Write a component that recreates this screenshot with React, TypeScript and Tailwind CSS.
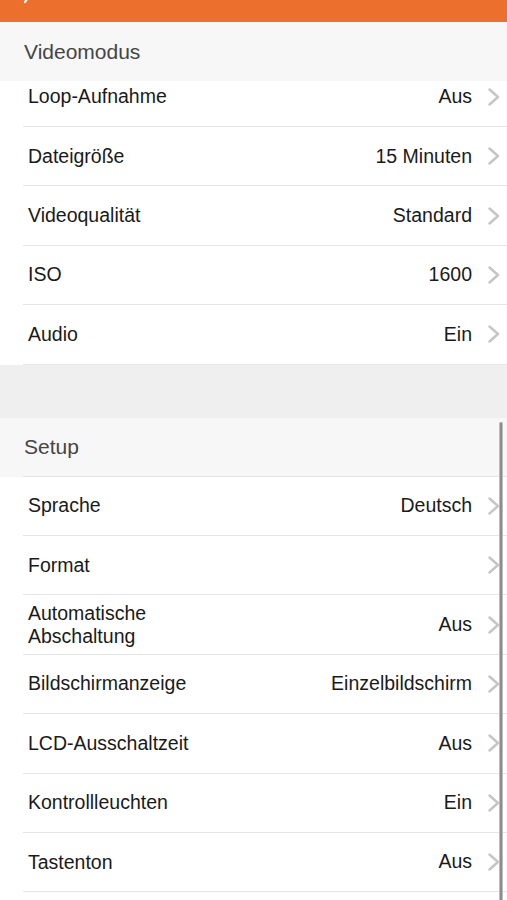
const videoRows = [
  { label: 'Dateigröße', value: '15 Minuten' },
  { label: 'Videoqualität', value: 'Standard' },
  { label: 'ISO', value: '1600' },
  { label: 'Audio', value: 'Ein' },
];

const setupRows = [
  { label: 'Sprache', value: 'Deutsch' },
  { label: 'Format', value: '' },
  { label: 'Automatische\nAbschaltung', value: 'Aus' },
  { label: 'Bildschirmanzeige', value: 'Einzelbildschirm' },
  { label: 'LCD-Ausschaltzeit', value: 'Aus' },
  { label: 'Kontrollleuchten', value: 'Ein' },
  { label: 'Tastenton', value: 'Aus' },
];

function Chevron() {
  return (
    <svg width="14" height="18" viewBox="0 0 14 18" className="shrink-0">
      <path d="M2.5 1.5 L11 9 L2.5 16.5" fill="none" stroke="#c5c5c7" strokeWidth="2.4" strokeLinecap="round" strokeLinejoin="round" />
    </svg>
  );
}

function Row({ label, value }: { label: string; value: string }) {
  return (
    <div className="pl-[23px] bg-white">
      <div className="h-[59.4px] flex items-center border-b border-[#e6e6e6] pl-[5px] pr-[6px]">
        <div className="flex-1 whitespace-pre-line leading-[23px] text-[#1a1a1a]">{label}</div>
        <div className="text-[#1a1a1a] mr-[15px]">{value}</div>
        <Chevron />
      </div>
    </div>
  );
}

function Header({ title }: { title: string }) {
  return (
    <div className="h-[59px] bg-[#f7f7f7] flex items-center pl-[24px] text-[21px] text-[#454545]">{title}</div>
  );
}

export default function App() {
  return (
    <div className="relative w-[507px] h-[900px] overflow-hidden bg-white text-[19.5px]" style={{ fontFamily: '"Liberation Sans", Arial, sans-serif' }}>
      {/* top bar, mostly scrolled away */}
      <div className="h-[22px] bg-[#ec6f2e] relative">
        <svg width="10" height="6" viewBox="0 0 10 6" className="absolute left-[22px] top-0">
          <path d="M7 -4 L3 2" stroke="#fff" strokeWidth="2.2" strokeLinecap="round" fill="none" />
        </svg>
      </div>

      <Header title="Videomodus" />
      <div className="h-[46px] overflow-hidden">
        <div className="-mt-[13.4px]">
          <Row label="Loop-Aufnahme" value="Aus" />
        </div>
      </div>
      {videoRows.map((r) => (
        <Row key={r.label} label={r.label} value={r.value} />
      ))}

      <div className="h-[53px] bg-[#efefef]" />

      <Header title="Setup" />
      <div className="border-t border-[#e6e6e6] ml-[23px] -mt-px" />
      {setupRows.map((r) => (
        <Row key={r.label} label={r.label} value={r.value} />
      ))}

      {/* scroll indicator */}
      <div className="absolute left-[499px] top-[422px] w-[4px] h-[480px] rounded-full bg-[#8c8c8c] border-x border-[#bdbdbd]" />
    </div>
  );
}
